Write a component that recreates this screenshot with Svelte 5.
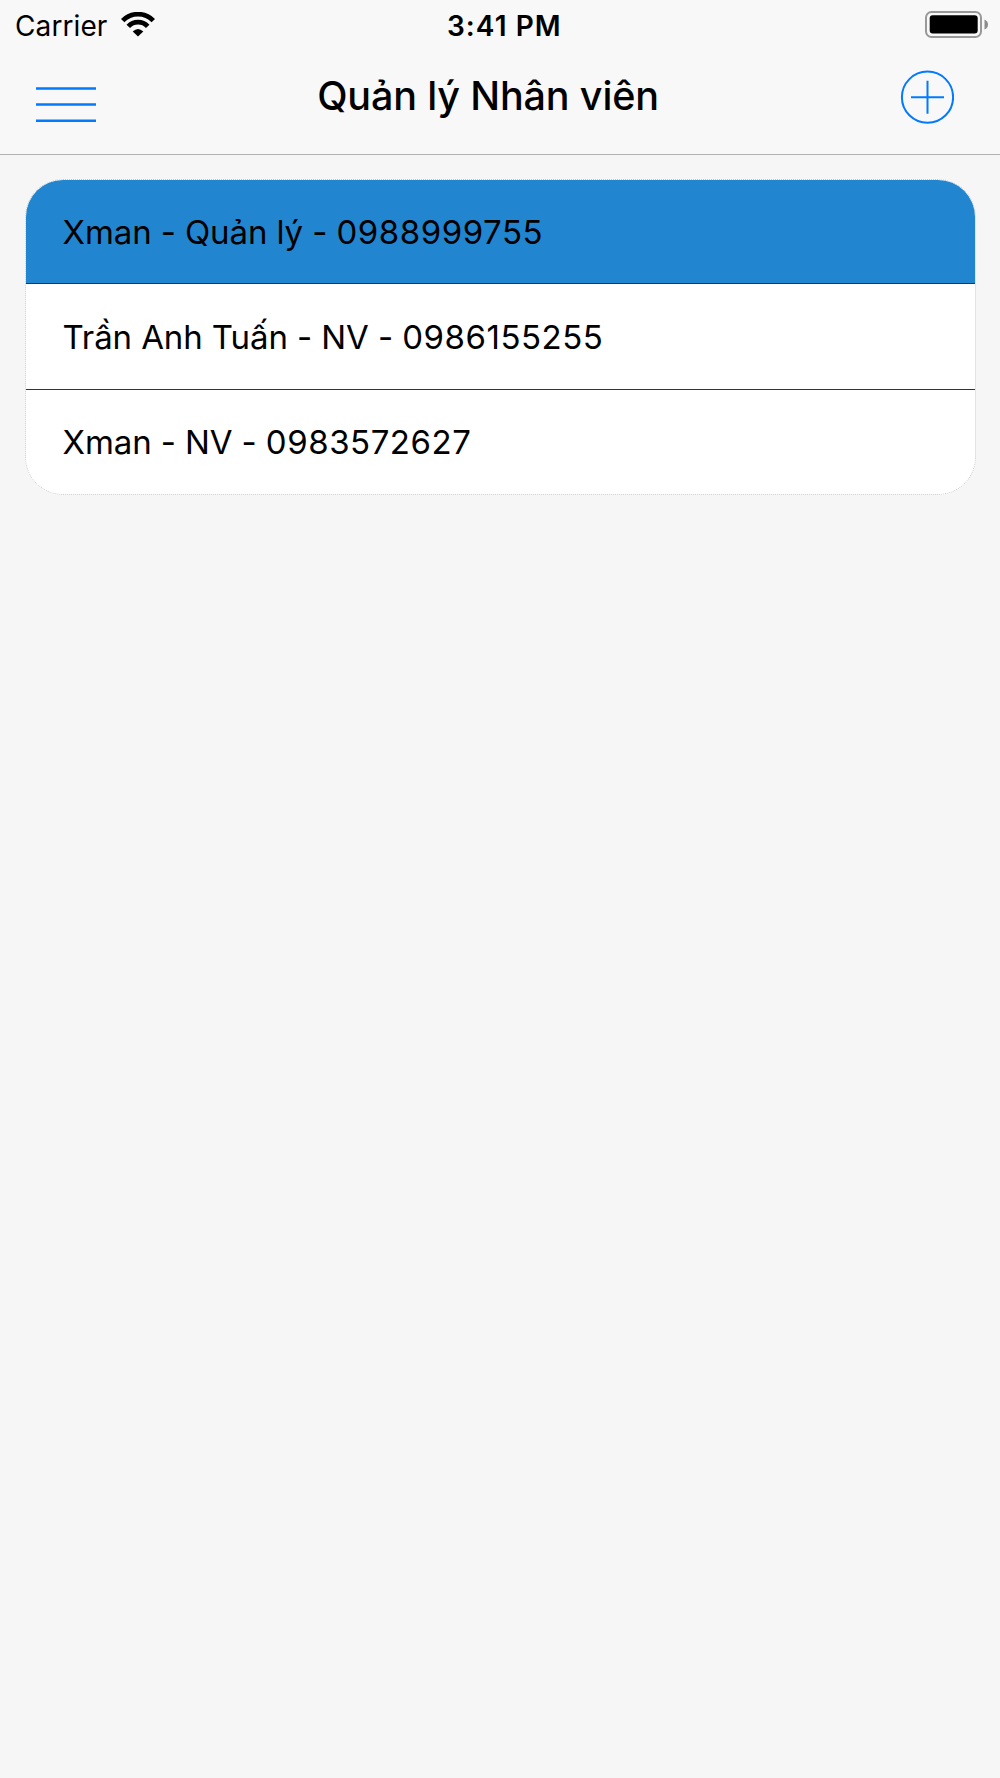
<script>
  let employees = [
    { id: 1, name: 'Xman', role: 'Quản lý', phone: '0988999755' },
    { id: 2, name: 'Trần Anh Tuấn', role: 'NV', phone: '0986155255' },
    { id: 3, name: 'Xman', role: 'NV', phone: '0983572627' }
  ];

  let selectedId = 1;

  const handleSelect = (id) => {
    selectedId = id;
  };
</script>

<main class="screen">
  <header>
    <div class="status">
      <div class="carrier">
        <span>Carrier</span>
        <svg class="wifi" viewBox="0 0 34 25" aria-hidden="true">
          <path d="M1.7 8.6 A21.5 21.5 0 0 1 32.3 8.6" />
          <path d="M7.3 14.4 A13.2 13.2 0 0 1 26.7 14.4" />
          <path class="dot" d="M11.7 19.4 Q17 14.4 22.3 19.4 L17 24.6 Z" />
        </svg>
      </div>
      <span class="time">3:41 PM</span>
      <svg class="battery" viewBox="0 0 64 28" aria-hidden="true">
        <rect class="shell" x="1" y="1" width="55" height="25" rx="5.5" />
        <rect x="4.7" y="4.2" width="48" height="18.4" rx="3" />
        <path class="cap" d="M59.5 8.5 Q63 10 63 13.5 Q63 17 59.5 18.5 Z" />
      </svg>
    </div>
    <nav>
      <button class="menu" type="button" aria-label="Menu">
        <svg width="60" height="36" viewBox="0 0 60 36">
          <path d="M0 1.5H60M0 17.6H60M0 33.7H60" />
        </svg>
      </button>
      <h1>Quản lý Nhân viên</h1>
      <button class="add" type="button" aria-label="Add">
        <svg width="54" height="54" viewBox="0 0 54 54">
          <circle cx="27.5" cy="27.2" r="25.6" />
          <path d="M11 27.2H44M27.5 10.7V43.7" />
        </svg>
      </button>
    </nav>
  </header>

  <ul class="list">
    {#each employees as employee (employee.id)}
      <li>
        <button
          class="row"
          class:selected={employee.id === selectedId}
          type="button"
          on:click={() => handleSelect(employee.id)}
        >
          {employee.name} - {employee.role} - <span class="phone">{employee.phone}</span>
        </button>
      </li>
    {/each}
  </ul>
</main>

<style>
  :global(body) {
    background: #f6f6f6;
  }

  .screen {
    min-height: 1778px;
    font-family: Inter, 'Liberation Sans', sans-serif;
    color: #000;
  }

  button {
    padding: 0;
    border: none;
    background: none;
    font: inherit;
    color: inherit;
    cursor: pointer;
  }

  svg {
    display: block;
  }

  header {
    box-sizing: border-box;
    height: 155px;
    background: #f8f8f8;
    border-bottom: 1px solid #b2b2b2;
  }

  .status {
    display: grid;
    grid-template-columns: 447px 1fr 64px;
    box-sizing: border-box;
    height: 50px;
    padding-right: 11px;
    font-size: 28px;
    line-height: 52px;
  }

  .carrier {
    display: flex;
    justify-content: space-between;
    width: 140px;
    padding-left: 15px;
    letter-spacing: 0.1px;
  }

  .wifi {
    width: 34px;
    height: 25px;
    margin-top: 12px;
  }

  .wifi path {
    fill: none;
    stroke: #000;
    stroke-width: 4.8;
  }

  .wifi .dot {
    fill: #000;
    stroke: none;
  }

  .time {
    font-weight: 570;
    letter-spacing: 1.05px;
  }

  .battery {
    width: 64px;
    height: 28px;
    margin-top: 11px;
  }

  .shell {
    fill: none;
    stroke: #999;
    stroke-width: 2;
  }

  .cap {
    fill: #8c8c8c;
  }

  nav {
    display: flex;
    justify-content: space-between;
    padding: 0 46px 0 36px;
  }

  nav svg {
    fill: none;
    stroke: #007aff;
    stroke-width: 2;
  }

  .menu {
    align-self: flex-start;
    margin-top: 37px;
  }

  .menu svg {
    stroke-width: 2.5;
  }

  .add {
    align-self: flex-start;
    margin-top: 20px;
  }

  h1 {
    margin: 22px 20px 0 0;
    font-size: 39.5px;
    line-height: 48px;
    font-weight: 470;
    letter-spacing: -0.15px;
    white-space: nowrap;
  }

  .list {
    margin: 24px 24px 0 25px;
    padding: 0;
    list-style: none;
    border: 1px dotted #c8c8c8;
    border-radius: 38px;
    background: #fff;
    overflow: hidden;
  }

  li + li {
    border-top: 1px solid #333;
  }

  .row {
    display: block;
    width: 100%;
    height: 105px;
    padding: 0 36.5px;
    font-size: 33px;
    font-weight: 370;
    line-height: 104px;
    letter-spacing: -0.1px;
    text-align: left;
    white-space: nowrap;
  }

  li:first-child .row {
    height: 103px;
  }

  li:last-child .row {
    height: 104px;
    line-height: 102px;
  }

  .row.selected {
    background: #2185d0;
  }

  .phone {
    letter-spacing: 0.53px;
  }
</style>
